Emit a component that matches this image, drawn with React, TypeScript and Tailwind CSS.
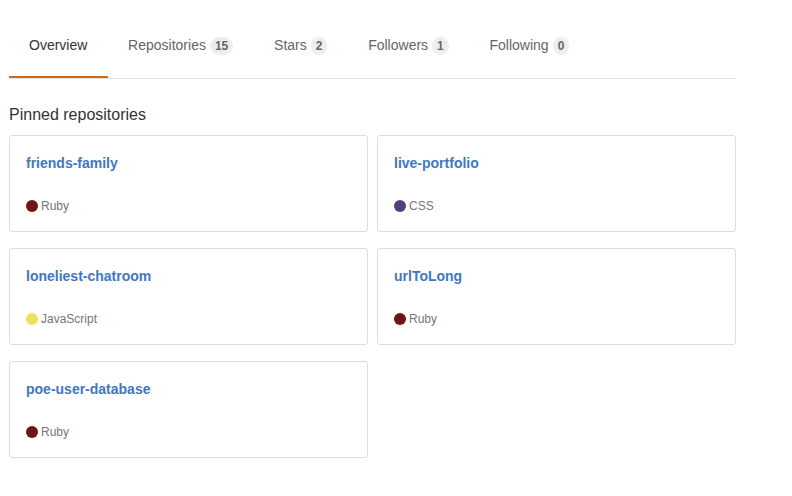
import React from "react";

const tabs = [
  { name: "Overview", count: null as string | null, active: true },
  { name: "Repositories", count: "15", active: false },
  { name: "Stars", count: "2", active: false },
  { name: "Followers", count: "1", active: false },
  { name: "Following", count: "0", active: false },
];

const repos = [
  { name: "friends-family", lang: "Ruby", color: "#701516" },
  { name: "live-portfolio", lang: "CSS", color: "#563d7c" },
  { name: "loneliest-chatroom", lang: "JavaScript", color: "#f1e05a" },
  { name: "urlToLong", lang: "Ruby", color: "#701516" },
  { name: "poe-user-database", lang: "Ruby", color: "#701516" },
];

export default function App() {
  return (
    <div
      className="w-[792px] h-[496px] bg-white text-[#24292e]"
      style={{ fontFamily: '"Liberation Sans", Arial, sans-serif' }}
    >
      <div className="w-[727px] ml-[9px] pt-[15px]">
        <nav className="flex border-b border-[#e1e4e8]">
          {tabs.map((t) => (
            <div
              key={t.name}
              className={`flex items-center pl-5 pr-[20.75px] pt-5 pb-5 text-[14px] leading-[21px] border-b-2 ${
                t.active
                  ? "border-[#d26911] text-[#333]"
                  : "border-transparent text-[#666]"
              }`}
            >
              {t.name}
              {t.count !== null && (
                <span className="ml-[4px] inline-block rounded-[20px] bg-[#eeeeee] px-[5px] text-[12px] leading-[18px] font-bold text-[#666]">
                  {t.count}
                </span>
              )}
            </div>
          ))}
        </nav>
        <h2 className="mt-6 mb-2 text-[16px] leading-6 font-normal text-[#333]">
          Pinned repositories
        </h2>
        <div className="grid grid-cols-2 gap-x-[9px] gap-y-4">
          {repos.map((r) => (
            <div
              key={r.name}
              className="border border-[#dddddd] rounded-[3px] px-4 pt-[17px] h-[97px] flex flex-col"
            >
              <a className="text-[14px] leading-5 font-bold text-[#4078c0]">
                {r.name}
              </a>
              <div className="mt-6 flex items-center text-[12px] leading-[18px] text-[#767676]">
                <span
                  className="inline-block w-3 h-3 rounded-full mr-[3px]"
                  style={{ backgroundColor: r.color }}
                />
                {r.lang}
              </div>
            </div>
          ))}
        </div>
      </div>
    </div>
  );
}
